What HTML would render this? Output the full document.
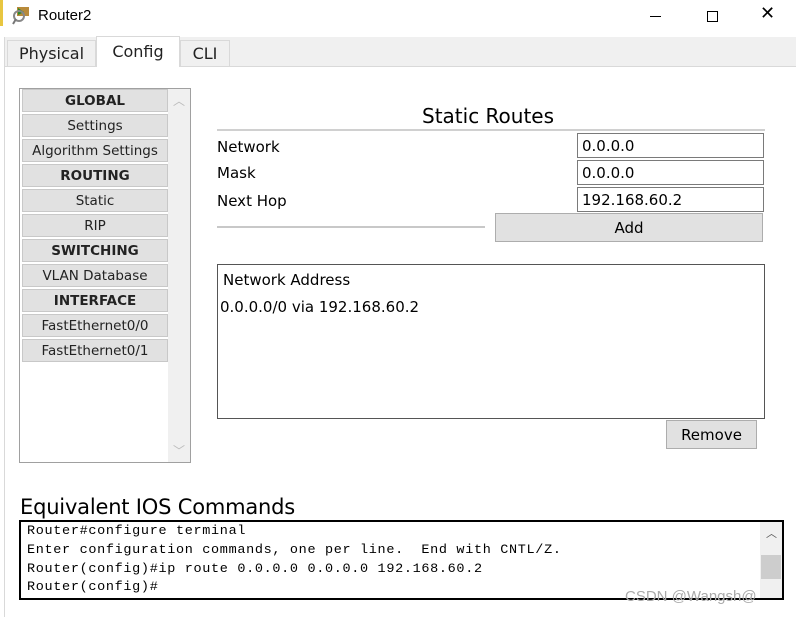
<!DOCTYPE html>
<html><head><style>
*{margin:0;padding:0;box-sizing:border-box}
body{width:796px;height:617px;background:#fff;font-family:"DejaVu Sans","Liberation Sans",sans-serif;position:relative;overflow:hidden;color:#000}
.a{position:absolute}
.btn{position:absolute;left:22px;width:146px;height:23px;background:#e1e1e1;border:1px solid #c8c8c8;font-size:13.5px;text-align:center;line-height:23px;color:#222}
.b{font-weight:bold}
.lbl{position:absolute;left:217px;font-size:15px}
.in{position:absolute;left:577px;width:187px;height:25px;border:1px solid #7a7a7a;font-size:15px;padding-left:4px;line-height:25px}
.mono{font-family:"Liberation Mono",monospace;font-size:13px;position:absolute;left:27px;white-space:pre;letter-spacing:0.65px;transform:scaleX(1.037);transform-origin:0 0}
</style></head><body>
<div class="a" style="left:0;top:0;width:3px;height:26px;background:#e8c640"></div>
<svg class="a" style="left:12px;top:6px" width="22" height="20" viewBox="0 0 22 20"><rect x="5" y="1" width="12" height="9" fill="#b88a3a"/><path d="M6 2 L12 6 L6 9z" fill="#2a8a2a"/><circle cx="7" cy="10" r="5" fill="none" stroke="#888" stroke-width="2"/><path d="M4 13 L1 18" stroke="#777" stroke-width="2"/></svg>
<div class="a" style="left:38px;top:7px;font-size:15px;font-family:'Liberation Sans',sans-serif">Router2</div>
<div class="a" style="left:650px;top:16px;width:11px;height:1px;background:#000"></div>
<div class="a" style="left:707px;top:11px;width:11px;height:11px;border:1px solid #000"></div>
<div class="a" style="left:760px;top:3px;font-size:18px;font-family:'Liberation Sans',sans-serif">✕</div>
<div class="a" style="left:4px;top:37px;width:792px;height:30px;background:#f0f0f0"></div>
<div class="a" style="left:4px;top:66px;width:792px;height:1px;background:#d9d9d9"></div>
<div class="a" style="left:4px;top:37px;width:1px;height:580px;background:#d9d9d9"></div>
<div class="a" style="left:7px;top:40px;width:89px;height:27px;border:1px solid #d9d9d9;border-bottom:none;font-size:16px;text-align:center;line-height:26px;color:#222">Physical</div>
<div class="a" style="left:96px;top:36px;width:84px;height:31px;background:#fff;border:1px solid #d9d9d9;border-bottom:none;font-size:16px;text-align:center;line-height:30px;color:#222">Config</div>
<div class="a" style="left:180px;top:40px;width:50px;height:27px;border:1px solid #d9d9d9;border-bottom:none;font-size:16px;text-align:center;line-height:26px;color:#222">CLI</div>

<div class="a" style="left:19px;top:88px;width:172px;height:375px;border:1px solid #a0a0a0;background:#fff"></div>
<div class="a" style="left:168px;top:89px;width:22px;height:373px;background:#f0f0f0"></div>
<div class="a" style="left:173px;top:92px;font-size:12px;color:#bbb">︿</div>
<div class="a" style="left:173px;top:442px;font-size:12px;color:#bbb">﹀</div>
<div class="btn b" style="top:89px">GLOBAL</div>
<div class="btn" style="top:114px">Settings</div>
<div class="btn" style="top:139px">Algorithm Settings</div>
<div class="btn b" style="top:164px">ROUTING</div>
<div class="btn" style="top:189px">Static</div>
<div class="btn" style="top:214px">RIP</div>
<div class="btn b" style="top:239px">SWITCHING</div>
<div class="btn" style="top:264px">VLAN Database</div>
<div class="btn b" style="top:289px">INTERFACE</div>
<div class="btn" style="top:314px">FastEthernet0/0</div>
<div class="btn" style="top:339px">FastEthernet0/1</div>

<div class="a" style="left:422px;top:104px;font-size:20px">Static Routes</div>
<div class="a" style="left:217px;top:129px;width:548px;height:2px;background:#d0d0d0"></div>
<div class="lbl" style="top:138px">Network</div>
<div class="lbl" style="top:164px">Mask</div>
<div class="lbl" style="top:192px">Next Hop</div>
<div class="in" style="top:133px">0.0.0.0</div>
<div class="in" style="top:160px">0.0.0.0</div>
<div class="in" style="top:187px">192.168.60.2</div>
<div class="a" style="left:217px;top:226px;width:268px;height:2px;background:#c8c8c8"></div>
<div class="a" style="left:495px;top:213px;width:268px;height:29px;background:#e1e1e1;border:1px solid #adadad;font-size:15px;text-align:center;line-height:28px">Add</div>
<div class="a" style="left:217px;top:264px;width:548px;height:155px;border:1px solid #555"></div>
<div class="a" style="left:223px;top:271px;font-size:15px">Network Address</div>
<div class="a" style="left:220px;top:298px;font-size:15px">0.0.0.0/0 via 192.168.60.2</div>
<div class="a" style="left:666px;top:420px;width:91px;height:29px;background:#e1e1e1;border:1px solid #adadad;font-size:15px;text-align:center;line-height:28px">Remove</div>

<div class="a" style="left:20px;top:495px;font-size:21px;font-family:'DejaVu Sans',sans-serif;letter-spacing:-0.2px">Equivalent IOS Commands</div>
<div class="a" style="left:19px;top:520px;width:765px;height:80px;border:2px solid #000"></div>
<div class="a" style="left:760px;top:522px;width:22px;height:76px;background:#f0f0f0"></div>
<div class="a" style="left:761px;top:555px;width:20px;height:24px;background:#cdcdcd"></div>
<div class="a" style="left:766px;top:525px;font-size:11px;color:#555">︿</div>
<div class="mono" style="top:523px">Router#configure terminal</div>
<div class="mono" style="top:542px">Enter configuration commands, one per line.  End with CNTL/Z.</div>
<div class="mono" style="top:561px">Router(config)#ip route 0.0.0.0 0.0.0.0 192.168.60.2</div>
<div class="mono" style="top:579px">Router(config)#</div>
<div class="a" style="left:625px;top:588px;font-size:15px;color:#aaa;font-family:'Liberation Sans',sans-serif">CSDN @Wangsh@</div>
</body></html>
